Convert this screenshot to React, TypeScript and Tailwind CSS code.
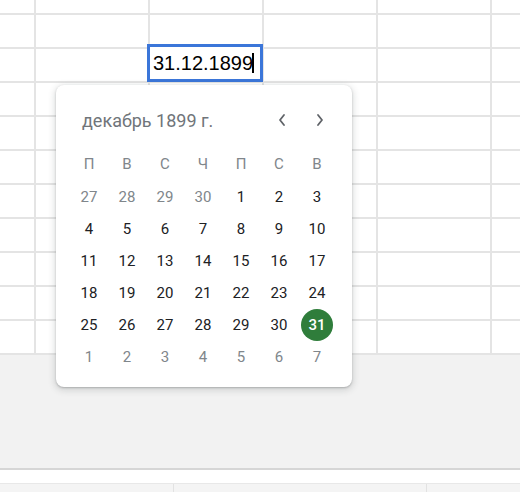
import React from "react";

const weekdays = ["П", "В", "С", "Ч", "П", "С", "В"];

type Day = { n: number; out?: boolean; sel?: boolean };

const weeks: Day[][] = [
  [{ n: 27, out: true }, { n: 28, out: true }, { n: 29, out: true }, { n: 30, out: true }, { n: 1 }, { n: 2 }, { n: 3 }],
  [{ n: 4 }, { n: 5 }, { n: 6 }, { n: 7 }, { n: 8 }, { n: 9 }, { n: 10 }],
  [{ n: 11 }, { n: 12 }, { n: 13 }, { n: 14 }, { n: 15 }, { n: 16 }, { n: 17 }],
  [{ n: 18 }, { n: 19 }, { n: 20 }, { n: 21 }, { n: 22 }, { n: 23 }, { n: 24 }],
  [{ n: 25 }, { n: 26 }, { n: 27 }, { n: 28 }, { n: 29 }, { n: 30 }, { n: 31, sel: true }],
  [{ n: 1, out: true }, { n: 2, out: true }, { n: 3, out: true }, { n: 4, out: true }, { n: 5, out: true }, { n: 6, out: true }, { n: 7, out: true }],
];

function Chevron({ dir }: { dir: "left" | "right" }) {
  return (
    <svg width="10" height="14" viewBox="0 0 10 14" fill="none">
      {dir === "left" ? (
        <path d="M7 2 L3 7 L7 12" stroke="#5f6368" strokeWidth="1.8" strokeLinecap="round" strokeLinejoin="round" />
      ) : (
        <path d="M3 2 L7 7 L3 12" stroke="#5f6368" strokeWidth="1.8" strokeLinecap="round" strokeLinejoin="round" />
      )}
    </svg>
  );
}

export default function App() {
  const rows = 11;
  const cols = 6;
  const cells = Array.from({ length: rows * cols });
  return (
    <div className="relative w-[520px] h-[492px] overflow-hidden bg-white font-['Roboto',sans-serif]">
      {/* Sheet grid */}
      <div className="grid grid-cols-[34px_112px_112px_112px_112px_1fr] grid-rows-[13px_repeat(10,32px)] gap-[2px] bg-[#e4e4e4] border-b-2 border-[#e4e4e4]">
        {cells.map((_, i) => (
          <div key={i} className="bg-white" />
        ))}
      </div>
      {/* Gray empty area */}
      <div className="h-[115px] bg-[#f2f2f2] border-b-2 border-[#d6d6d6]" />
      <div className="h-[14px] bg-white border-b border-[#e8e8e8]" />
      <div className="flex h-[10px] bg-[#f4f4f4]">
        <div className="w-[174px] border-r border-[#e2e2e2]" />
        <div className="w-[253px] border-r border-[#e2e2e2]" />
        <div className="flex-1" />
      </div>

      {/* Cell editor */}
      <div className="absolute left-[147px] top-[44px] w-[116px] h-[38px] border-[3px] border-[#3b76d9] bg-white flex items-center pl-[3px]">
        <span className="font-['Liberation_Sans',Arial,sans-serif] text-[20px] leading-none text-black">31.12.1899</span>
        <span className="w-[2px] h-[20px] bg-black -ml-[1px]" />
      </div>

      {/* Date picker popup */}
      <div className="absolute left-[56px] top-[85px] w-[296px] bg-white rounded-lg shadow-[0_2px_6px_2px_rgba(60,64,67,0.15),0_1px_2px_rgba(60,64,67,0.3)] pt-[18px] pb-[14px] pl-[14px] pr-[16px]">
        <div className="flex items-center h-[34px]">
          <div className="pl-[12px] text-[18px] text-[#70757a] flex-1">декабрь 1899 г.</div>
          <div className="flex gap-[6px]">
            <div className="w-[32px] h-[32px] flex items-center justify-center">
              <Chevron dir="left" />
            </div>
            <div className="w-[32px] h-[32px] flex items-center justify-center">
              <Chevron dir="right" />
            </div>
          </div>
        </div>
        <div className="grid grid-cols-7 mt-[11px] mb-[1px]">
          {weekdays.map((w, i) => (
            <div key={i} className="h-[32px] flex items-center justify-center text-[15px] text-[#80868b]">
              {w}
            </div>
          ))}
        </div>
        {weeks.map((wk, r) => (
          <div key={r} className="grid grid-cols-7">
            {wk.map((d, c) => (
              <div key={c} className="h-[32px] flex items-center justify-center">
                {d.sel ? (
                  <div className="w-[32px] h-[32px] rounded-full bg-[#2f7d3b] text-white text-[15px] font-medium flex items-center justify-center">
                    {d.n}
                  </div>
                ) : (
                  <span className={`text-[15px] ${d.out ? "text-[#80868b]" : "text-[#202124]"}`}>{d.n}</span>
                )}
              </div>
            ))}
          </div>
        ))}
      </div>
    </div>
  );
}
